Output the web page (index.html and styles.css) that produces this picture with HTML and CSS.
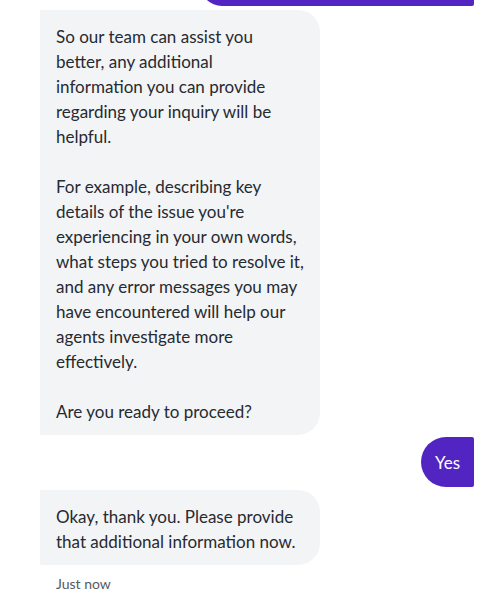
FILE: index.html
```html
<!DOCTYPE html>
<html lang="en">
<head>
<meta charset="utf-8">
<title>Chat</title>
<link rel="stylesheet" href="styles.css">
</head>
<body>
<div class="chat">
  <div class="msg user prev"></div>
  <div class="msg bot">So our team can assist you better, any additional<br>information you can provide regarding your inquiry will be helpful.<br><br>For example, describing key details of the issue you're experiencing in your own words, what steps you tried to resolve it, and any error messages you may have encountered will help our agents investigate more effectively.<br><br>Are you ready to proceed?</div>
  <div class="msg user yes">Yes</div>
  <div class="msg bot">Okay, thank you. Please provide that additional information now.</div>
  <div class="time">Just now</div>
</div>
</body>
</html>
```

FILE: styles.css
```css
html, body {
  margin: 0;
  padding: 0;
  background: #ffffff;
}
body {
  font-family: "Lato", "Noto Sans", sans-serif;
  overflow: hidden;
}
.chat {
  display: flex;
  flex-direction: column;
  gap: 3px;
  padding: 0 12px 0 40px;
}
.msg {
  font-size: 17px;
  line-height: 25px;
  padding: 14px 16px 11px;
  box-sizing: border-box;
}
.bot {
  align-self: flex-start;
  max-width: 280px;
  background: #f3f4f6;
  color: #262a31;
  border-radius: 2px 22px 22px 2px;
}
.user {
  align-self: flex-end;
  background: #5224c2;
  color: #ffffff;
  border-radius: 25px 2px 2px 25px;
  padding: 13px 14px 12px;
}
.yes {
  margin-top: -1px;
}
.prev {
  width: 274px;
  height: 50px;
  margin-top: -44px;
  border-radius: 22px 2px 2px 22px;
  margin-bottom: 1px;
}
.time {
  font-size: 14px;
  color: #555a63;
  padding: 7px 16px 0;
}
```
